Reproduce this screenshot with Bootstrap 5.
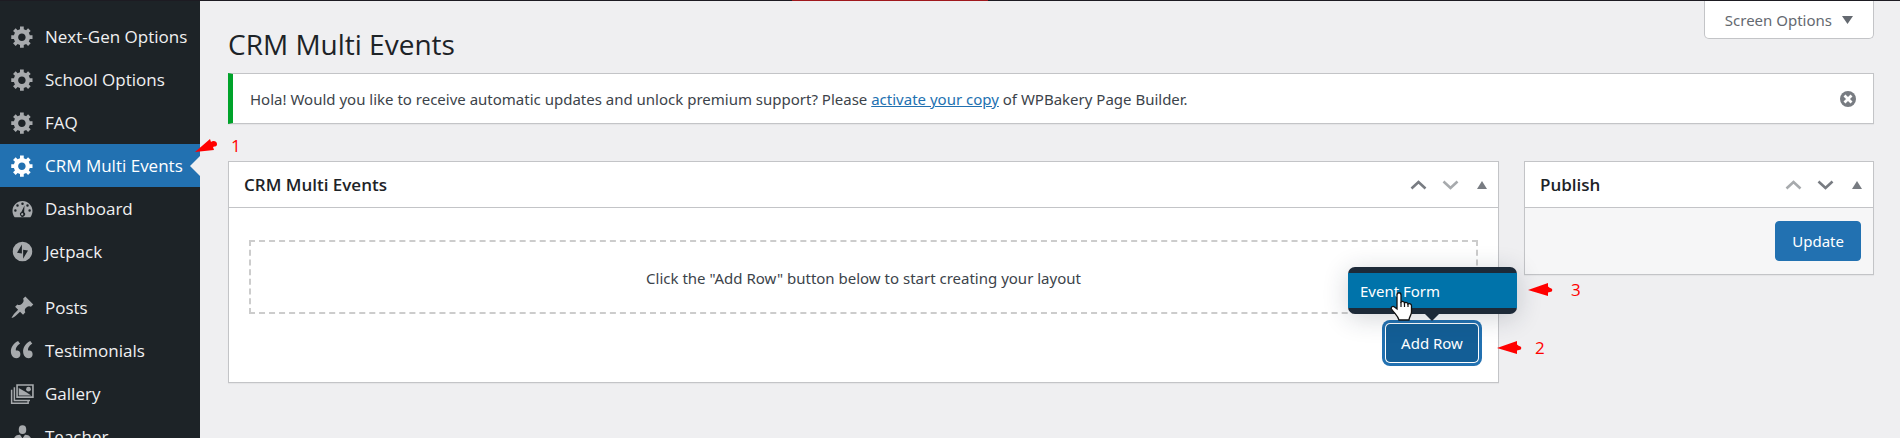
<!DOCTYPE html>
<html lang="en">
<head>
<meta charset="utf-8">
<meta name="viewport" content="width=device-width, initial-scale=1">
<title>CRM Multi Events</title>
<link href="https://cdn.jsdelivr.net/npm/bootstrap@5.3.0/dist/css/bootstrap.min.css" rel="stylesheet">
<style>
body{font-family:"Noto Sans","Open Sans",sans-serif;font-size:15px;line-height:24px;color:#3c434a;background:#efeff1}
.topbar{height:1px;background:#1d1b22}
.topbar span{display:block;height:1px;width:10.3%;margin-left:41.7%;background:#a0181d}
.shell{height:calc(100vh - 1px)}
.side{width:200px;background:#1d2327;padding-top:14px;z-index:2}
.side a{height:43px;gap:10px;padding-left:10px;font-family:"Open Sans",sans-serif;font-size:17px;color:#f0f0f1;text-decoration:none;white-space:nowrap}
.side svg.ico{width:25px;height:25px;fill:#a7aaad;flex:none}
.side .current{background:#2271b1;color:#fff}
.side .current svg.ico{fill:#fff}
.side .current::after{content:"";position:absolute;right:0;top:12px;border:10px solid transparent;border-left:0;border-right-color:#efeff1}
.side .group-start{margin-top:13px}
.page{padding:0 26px 0 28px;min-width:0}
h1{font-family:"Open Sans",sans-serif;font-size:28px;line-height:36px;font-weight:400;color:#1d2327;margin:25px 0 11px}
.screen-opt{height:38px;padding:0 20px 0 20px;gap:10px;border:1px solid #c3c4c7;border-top:0;border-radius:0 0 5px 5px;background:#fff;color:#646970}
.notice{background:#fff;border:1px solid #c3c4c7;border-left:5px solid #00a32a;padding:13px 16px 12px 17px;margin-bottom:37px;box-shadow:0 1px 1px rgba(0,0,0,.04)}
.notice a{color:#2271b1}
.plain{border:0;background:none;padding:0;display:flex;align-items:center;justify-content:center}
.boxes{gap:25px}
.postbox{background:#fff;border:1px solid #c3c4c7;box-shadow:0 1px 1px rgba(0,0,0,.04)}
.postbox header{height:46px;border-bottom:1px solid #c3c4c7;padding-left:15px}
.postbox h2{font-family:"Open Sans",sans-serif;font-size:17px;font-weight:600;line-height:24px;color:#1d2327;margin:0}
.postbox header .plain{width:32px;height:45px;color:#787c82}
.postbox header .plain:disabled{color:#a7aaad}
.publish{width:350px;flex:none}
.publish .actions{background:#f6f6f7;padding:13px 12px}
.btn-wp{--bs-btn-color:#fff;--bs-btn-bg:#2271b1;--bs-btn-border-color:#2271b1;--bs-btn-hover-color:#fff;--bs-btn-hover-bg:#135e96;font-size:15px;line-height:24px;padding:7px 16px;border-radius:4px}
.builder{padding:32px 20px 20px}
.empty-area{border:2px dashed #ccc;padding:24px 0 22px}
.adder{margin-top:10px}
.btn-add{--bs-btn-bg:#135e96;--bs-btn-border-color:#135e96;padding:6px 12px;width:92px;white-space:nowrap;box-shadow:0 0 0 1px #fff,0 0 0 4px #2271b1}
.layouts{position:absolute;bottom:48px;left:50%;margin-left:-84px;width:169px;padding:6px 0;background:#1d2a38;border-radius:7px;box-shadow:0 4px 26px rgba(30,40,60,.2);z-index:3}
.layouts::after{content:"";position:absolute;top:100%;left:77px;border:7px solid transparent;border-top-color:#1d2a38;border-bottom:0}
.layouts a{display:block;background:#0073aa;color:#fff;text-decoration:none;padding:6px 12px 5px}
.pointer{position:absolute;left:42px;top:25px;z-index:4}
.callout-mark{position:absolute;display:flex;align-items:center;color:#f00;font-family:"Open Sans",sans-serif;font-size:17px;line-height:24px;z-index:5}
.callout-mark svg{fill:#f00}
.mark-menu{left:195px;top:-10px;gap:14px}
.mark-add{left:111px;top:12px;gap:13px}
.mark-form{left:180px;top:11px;gap:18px}
</style>
</head>
<body>
<svg class="d-none" aria-hidden="true">
<symbol id="gear" viewBox="0 0 20 20"><path d="M18 12h-2.18c-.17.7-.44 1.35-.81 1.93l1.54 1.54-2.1 2.1-1.54-1.54c-.58.36-1.23.63-1.91.79V19H8v-2.18c-.68-.16-1.33-.43-1.91-.79l-1.54 1.54-2.12-2.12 1.54-1.54c-.36-.58-.63-1.23-.79-1.91H1V9.03h2.17c.16-.7.44-1.35.8-1.94L2.43 5.55l2.1-2.1 1.54 1.54c.58-.37 1.24-.64 1.93-.81V2h3v2.18c.68.16 1.33.43 1.91.79l1.54-1.54 2.12 2.12-1.54 1.54c.36.59.64 1.24.8 1.94H18V12zm-8.500 1.500c1.660 0 3-1.340 3-3s-1.340-3-3-3-3 1.340-3 3 1.340 3 3 3z"/></symbol>
<symbol id="up" viewBox="0 0 16 10"><path d="M1 8.500 8 2l7 6.500" fill="none" stroke="currentColor" stroke-width="2.600"/></symbol>
<symbol id="down" viewBox="0 0 16 10"><path d="M1 1.500 8 8l7-6.500" fill="none" stroke="currentColor" stroke-width="2.600"/></symbol>
<symbol id="tri" viewBox="0 0 10 8"><path d="M5 0l5 8H0z" fill="currentColor"/></symbol>
<symbol id="arrow" viewBox="0 0 25 14"><path d="M0 7 20 0v3.500l2 1.500c3 0 3 4 0 4l-2 .5V13z"/></symbol>
</svg>
<div class="topbar"><span></span></div>
<div class="shell d-flex overflow-hidden">
<nav class="side flex-shrink-0 position-relative" aria-label="Admin menu">
<a href="#" class="d-flex align-items-center"><svg class="ico"><use href="#gear"/></svg>Next-Gen Options</a>
<a href="#" class="d-flex align-items-center"><svg class="ico"><use href="#gear"/></svg>School Options</a>
<a href="#" class="d-flex align-items-center"><svg class="ico"><use href="#gear"/></svg>FAQ</a>
<div class="position-relative">
<a href="#" class="current d-flex align-items-center" aria-current="page"><svg class="ico"><use href="#gear"/></svg>CRM Multi Events</a>
<div class="callout-mark mark-menu"><svg width="22" height="16" viewBox="0 0 22 16"><path d="M0 14 15 1l1 3c2-2 6-1 6 2s-2 2-4 3l1 3z"/></svg>1</div>
</div>
<a href="#" class="d-flex align-items-center"><svg class="ico" viewBox="0 0 20 20"><path fill-rule="evenodd" d="M3.760 17h12.480c1.100-1.370 1.760-3.110 1.760-5 0-4.420-3.580-8-8-8s-8 3.580-8 8c0 1.890.66 3.630 1.760 5zM10 5.200a1 1 0 1 1 0 2 1 1 0 0 1 0-2zM6 6.500a1 1 0 1 1 0 2 1 1 0 0 1 0-2zM14 6.500a1 1 0 1 1 0 2 1 1 0 0 1 0-2zM4.300 10.500a1 1 0 1 1 0 2 1 1 0 0 1 0-2zM15.700 10.500a1 1 0 1 1 0 2 1 1 0 0 1 0-2zM11.600 7.500 11.300 13a2 2 0 1 1-2.200-.2zM9.700 13.700a.9.9 0 1 0 .1 1.800.9.9 0 0 0-.1-1.800z"/></svg>Dashboard</a>
<a href="#" class="d-flex align-items-center"><svg class="ico" viewBox="0 0 20 20"><path fill-rule="evenodd" d="M10 2.200a7.800 7.800 0 1 0 0 15.600 7.800 7.800 0 0 0 0-15.600zM9.500 4.300v7.200L5.600 10.900zM10.500 15.700V8.500l3.900.6z"/></svg>Jetpack</a>
<a href="#" class="group-start d-flex align-items-center"><svg class="ico" viewBox="0 0 20 20"><path d="M10.440 3.020l1.820-1.820 6.360 6.350-1.830 1.820c-1.050-.68-2.480-.57-3.410.36l-.75.75c-.92.93-1.040 2.350-.35 3.410l-1.830 1.820-2.410-2.410-2.800 2.790c-.42.42-3.380 2.710-3.800 2.290s1.860-3.390 2.280-3.810l2.790-2.790L4.100 9.360l1.830-1.820c1.050.69 2.480.57 3.400-.36l.75-.75c.93-.92 1.050-2.350.36-3.410z"/></svg>Posts</a>
<a href="#" class="d-flex align-items-center"><svg class="ico" viewBox="0 0 20 20"><path transform="translate(-2.600 -2.200) scale(1.150)" d="M9.490 13.220c0-.74-.2-1.380-.61-1.900-.62-.78-1.830-.88-2.530-.72-.29-1.650 1.110-3.750 2.920-4.650L7.880 4c-2.730 1.300-5.420 4.280-4.960 8.050C3.210 14.430 4.590 16 6.540 16c.85 0 1.560-.25 2.120-.75s.83-1.180.83-2.030zm8.500 0c0-.74-.2-1.380-.61-1.900-.63-.78-1.830-.88-2.530-.72-.29-1.650 1.110-3.750 2.920-4.650L16.380 4c-2.730 1.300-5.410 4.280-4.950 8.050.29 2.380 1.660 3.950 3.610 3.950.85 0 1.560-.25 2.120-.75s.83-1.180.83-2.030z"/></svg>Testimonials</a>
<a href="#" class="d-flex align-items-center"><svg class="ico" viewBox="0 0 20 20"><path fill-rule="evenodd" d="M5 2.500h14v11H5zM6.300 3.800v8.400h11.400V3.800z"/><path d="M7 5.500l6 3.500 4 2.500H7z"/><circle cx="14.800" cy="6.500" r="1.900"/><path d="M3.500 5v10.500H16M1.300 7v10.700H14.500V16" fill="none" stroke="#a7aaad" stroke-width="1.200"/></svg>Gallery</a>
<a href="#" class="d-flex align-items-center"><svg class="ico" viewBox="0 0 20 20"><ellipse cx="10" cy="4.500" rx="3" ry="3.500"/><path d="M3 18v-5c0-3 2-4.500 5-4.500l2 3 2-3c3 0 5 1.500 5 4.500v5z"/></svg>Teacher</a>
</nav>
<main class="page flex-grow-1">
<div class="d-flex justify-content-between align-items-start">
<h1>CRM Multi Events</h1>
<button type="button" class="screen-opt d-flex align-items-center">Screen Options <svg width="11" height="8" viewBox="0 0 11 8"><path d="M0 0h11L5.500 8z" fill="#646970"/></svg></button>
</div>
<div class="notice d-flex justify-content-between align-items-center" role="status">
<div>Hola! Would you like to receive automatic updates and unlock premium support? Please <a href="#">activate your copy</a> of WPBakery Page Builder.</div>
<button type="button" class="plain" aria-label="Dismiss this notice"><svg width="18" height="16" viewBox="0 0 18 16"><circle cx="9" cy="8" r="8" fill="#787c82"/><path d="M5.500 4.500l7 7M12.500 4.500l-7 7" stroke="#fff" stroke-width="2.800"/></svg></button>
</div>
<div class="boxes d-flex align-items-start">
<section class="postbox flex-grow-1">
<header class="d-flex align-items-center"><h2 class="me-auto">CRM Multi Events</h2>
<button type="button" class="plain" aria-label="Move up"><svg width="17" height="10"><use href="#up"/></svg></button>
<button type="button" class="plain" aria-label="Move down" disabled><svg width="17" height="10"><use href="#down"/></svg></button>
<button type="button" class="plain" aria-label="Toggle panel"><svg width="10" height="8"><use href="#tri"/></svg></button>
</header>
<div class="builder">
<div class="empty-area text-center">Click the "Add Row" button below to start creating your layout</div>
<div class="adder d-flex justify-content-end">
<div class="position-relative">
<button type="button" class="btn btn-wp btn-add d-block" aria-expanded="true">Add Row</button>
<div class="layouts"><a href="#">Event Form</a>
<svg class="pointer" width="23" height="30" viewBox="0 0 23 30"><path d="M7 3c0-3 4-3 4 0v7c1-1 3.500-.5 3.500 1 1-1 3.500-.5 3.500 1 1.500-1 3.500 0 3.500 2v6c0 3-2 4-2.500 8H9c-1-4-4-6-7.500-11-1-2 1.500-3.500 3-2L7 17z" fill="#fff" stroke="#111" stroke-width="1.300"/><path d="M11 10v5M14.500 11v4M18 12v3" stroke="#111" stroke-width="1.200"/></svg>
<div class="callout-mark mark-form"><svg width="25" height="14"><use href="#arrow"/></svg>3</div>
</div>
<div class="callout-mark mark-add"><svg width="25" height="14"><use href="#arrow"/></svg>2</div>
</div>
</div>
</div>
</section>
<section class="postbox publish">
<header class="d-flex align-items-center"><h2 class="me-auto">Publish</h2>
<button type="button" class="plain" aria-label="Move up" disabled><svg width="17" height="10"><use href="#up"/></svg></button>
<button type="button" class="plain" aria-label="Move down"><svg width="17" height="10"><use href="#down"/></svg></button>
<button type="button" class="plain" aria-label="Toggle panel"><svg width="10" height="8"><use href="#tri"/></svg></button>
</header>
<div class="actions d-flex justify-content-end"><button type="button" class="btn btn-wp">Update</button></div>
</section>
</div>
</main>
</div>
<script src="https://cdn.jsdelivr.net/npm/bootstrap@5.3.0/dist/js/bootstrap.bundle.min.js"></script>
</body>
</html>
